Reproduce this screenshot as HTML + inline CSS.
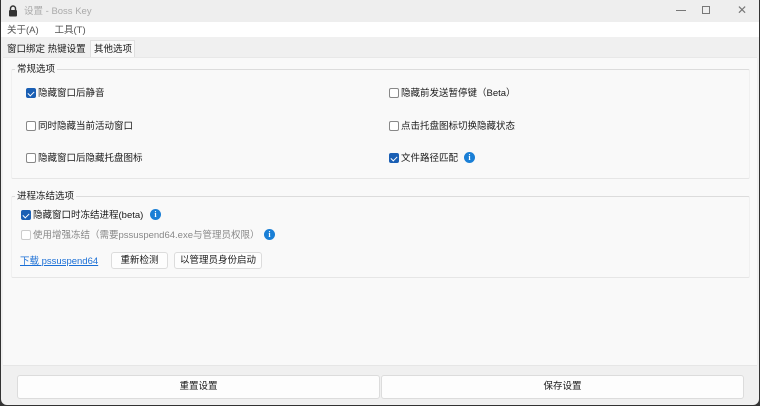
<!DOCTYPE html>
<html><head><meta charset="utf-8"><style>
*{margin:0;padding:0;box-sizing:border-box}
body{width:760px;height:406px;overflow:hidden;background:#333;font-family:"Liberation Sans","Noto Sans CJK SC",sans-serif;font-size:9.5px;color:#1a1a1a;position:relative}
.win{position:absolute;left:1px;top:0;width:758px;height:405px;background:#f0f0f0;border-radius:0 0 6px 6px;overflow:hidden}
.a{position:absolute;white-space:nowrap;line-height:12px}
.title{left:0;top:0;width:758px;height:22px;background:#eeeeee}
.menu{left:0;top:22px;width:758px;height:15px;background:#fff}
.panel{left:2px;top:57px;width:754px;height:309px;background:#f9f9f9;border-top:1px solid #e8e8e8;border-bottom:1px solid #e6e6e6}
.cb{position:absolute;width:10px;height:10px;border:1px solid #888;border-radius:2px;background:#fff}
.cb.on{background:#1a5fb4;border-color:#1a5fb4}
.cb.on::after{content:"";position:absolute;left:2px;top:1px;width:3px;height:5px;border:solid #fff;border-width:0 1px 1px 0;transform:rotate(45deg)}
.info{position:absolute;width:11px;height:11px;border-radius:50%;background:#1a7fd6;color:#fff;font-size:8px;font-weight:bold;text-align:center;line-height:11px;font-family:"Liberation Serif",serif}
.gb{position:absolute;border:1px solid #f0f0f0;border-top-color:#dcdcdc;border-bottom-color:#e6e6e6;border-radius:2px}
.btn{position:absolute;background:#fdfdfd;border:1px solid #dcdcdc;border-radius:3px;text-align:center}
</style></head><body><div class="win">
<div class="a title"></div>
<svg class="a" style="left:7px;top:5px" width="10" height="12" viewBox="0 0 10 12"><path d="M2.5 5V3.5a2.5 2.5 0 0 1 5 0V5" fill="none" stroke="#333" stroke-width="1.4"/><rect x="1" y="5" width="8" height="6.5" rx="1" fill="#333"/></svg>
<div class="a" style="left:23px;top:6px;color:#aaa">设置 - Boss Key</div>
<div class="a" style="left:675px;top:10px;width:10px;height:1px;background:#777"></div>
<div class="a" style="left:701px;top:6px;width:8px;height:8px;border:1px solid #777"></div>
<div class="a" style="left:736px;top:4px;color:#777;font-size:12px">✕</div>
<div class="a menu"></div>
<div class="a" style="left:6px;top:25px;color:#555">关于(A)&nbsp;&nbsp;&nbsp;&nbsp;&nbsp;&nbsp;工具(T)</div>
<div class="a" style="left:89px;top:40px;width:45px;height:18px;background:#f9f9f9;border:1px solid #e0e0e0;border-bottom:none"></div>
<div class="a" style="left:6px;top:44px">窗口绑定 热键设置</div>
<div class="a" style="left:93px;top:44px">其他选项</div>
<div class="a panel"></div>
<div class="gb" style="left:10px;top:69px;width:739px;height:110px"></div>
<div class="a" style="left:14px;top:64px;background:#f9f9f9;padding:0 2px">常规选项</div>
<div class="cb on" style="left:25px;top:88px"></div><div class="a" style="left:37px;top:88px">隐藏窗口后静音</div>
<div class="cb" style="left:25px;top:121px"></div><div class="a" style="left:37px;top:121px">同时隐藏当前活动窗口</div>
<div class="cb" style="left:25px;top:153px"></div><div class="a" style="left:37px;top:153px">隐藏窗口后隐藏托盘图标</div>
<div class="cb" style="left:388px;top:88px"></div><div class="a" style="left:400px;top:88px">隐藏前发送暂停键（Beta）</div>
<div class="cb" style="left:388px;top:121px"></div><div class="a" style="left:400px;top:121px">点击托盘图标切换隐藏状态</div>
<div class="cb on" style="left:388px;top:153px"></div><div class="a" style="left:400px;top:153px">文件路径匹配</div><div class="info" style="left:463px;top:152px">i</div>
<div class="gb" style="left:10px;top:196px;width:739px;height:82px"></div>
<div class="a" style="left:14px;top:191px;background:#f9f9f9;padding:0 2px">进程冻结选项</div>
<div class="cb on" style="left:20px;top:210px"></div><div class="a" style="left:32px;top:210px">隐藏窗口时冻结进程(beta)</div><div class="info" style="left:149px;top:209px">i</div>
<div class="cb" style="left:20px;top:230px;border-color:#ccc"></div><div class="a" style="left:32px;top:230px;color:#888">使用增强冻结（需要pssuspend64.exe与管理员权限）</div><div class="info" style="left:263px;top:229px">i</div>
<div class="a" style="left:19px;top:256px;color:#1a6fd6;text-decoration:underline">下载 pssuspend64</div>
<div class="btn" style="left:110px;top:252px;width:57px;height:17px;line-height:15px">重新检测</div>
<div class="btn" style="left:173px;top:252px;width:88px;height:17px;line-height:15px">以管理员身份启动</div>
<div class="btn" style="left:16px;top:375px;width:363px;height:24px;line-height:22px">重置设置</div>
<div class="btn" style="left:380px;top:375px;width:363px;height:24px;line-height:22px">保存设置</div>
</div></body></html>
